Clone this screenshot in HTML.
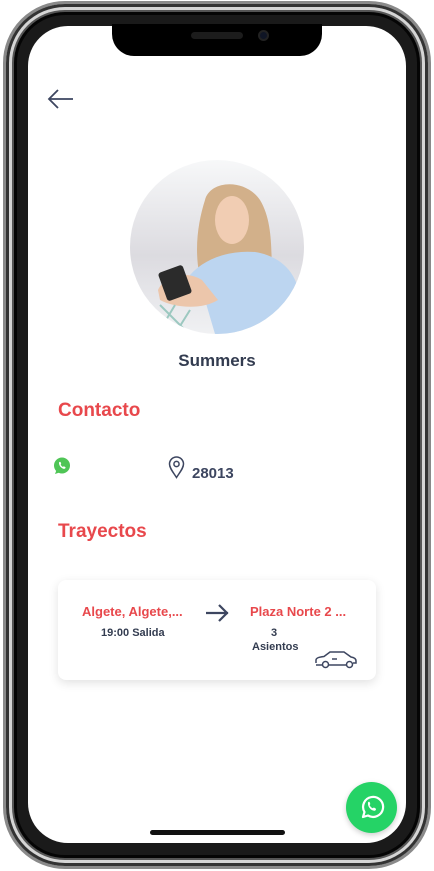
<!DOCTYPE html>
<html><head><meta charset="utf-8"><style>
*{margin:0;padding:0;box-sizing:border-box}
html,body{width:434px;height:871px;background:#fff;overflow:hidden;font-family:"Liberation Sans",sans-serif}
.frame{position:absolute;left:3px;top:1px;width:428px;height:868px;border-radius:62px;background:#1a1a1a;border:3px solid #8a8a8a;box-shadow:inset 0 0 0 3px #333,inset 0 0 0 6px #d5d5d5,inset 0 0 0 8px #555,inset 0 0 0 11px #050505}
.screen{position:absolute;left:28px;top:26px;width:378px;height:817px;border-radius:40px;background:#fff;overflow:hidden}
.notch{position:absolute;left:112px;top:24px;width:210px;height:32px;background:#000;border-radius:0 0 22px 22px}
.spk{position:absolute;left:191px;top:32px;width:52px;height:7px;border-radius:4px;background:#1c1c1c}
.cam{position:absolute;left:258px;top:30px;width:11px;height:11px;border-radius:50%;background:#0f1525;border:2px solid #222}
.t{position:absolute;white-space:nowrap}
.h{color:#e8484c;font-weight:bold;font-size:19px}
.card{position:absolute;left:58px;top:580px;width:318px;height:100px;background:#fff;border-radius:8px;box-shadow:0 3px 10px rgba(0,0,0,.12)}
.r{color:#e8484c;font-weight:bold;font-size:13px}
.d{color:#333c50;font-weight:bold;font-size:11px}
</style></head><body>
<div class="frame"></div>
<div class="screen"></div>
<div class="notch"></div><div class="spk"></div><div class="cam"></div>
<svg class="t" style="left:47px;top:88px" width="28" height="22" viewBox="0 0 28 22"><path d="M26 11H2M11 2L2 11l9 9" fill="none" stroke="#3d4660" stroke-width="1.8"/></svg>
<svg class="t" style="left:130px;top:160px" width="174" height="174" viewBox="0 0 174 174">
<defs><clipPath id="c"><circle cx="87" cy="87" r="87"/></clipPath>
<linearGradient id="bg" x1="0" y1="0" x2="0" y2="1"><stop offset="0" stop-color="#f7f8f9"/><stop offset=".55" stop-color="#dcdbe0"/><stop offset="1" stop-color="#f0f1f3"/></linearGradient></defs>
<g clip-path="url(#c)"><rect width="174" height="174" fill="url(#bg)"/>
<path d="M75 40C80 20 115 18 130 40C145 65 140 100 143 125L75 135C62 100 67 65 75 40Z" fill="#d2b08a"/>
<ellipse cx="102" cy="60" rx="17" ry="24" fill="#f1cdb3"/>
<path d="M60 115C75 98 100 90 125 92C150 96 168 112 170 140L165 174H85L75 140L55 125Z" fill="#bcd5f0"/>
<path d="M28 130C35 115 55 110 72 120L88 140C72 150 45 148 30 140Z" fill="#ecc6ab"/>
<rect x="32" y="108" width="26" height="30" rx="3" transform="rotate(-20 45 123)" fill="#2b2b2b"/>
<path d="M30 145L60 175M45 145L30 170M60 150L45 174" stroke="#9cc8c0" stroke-width="2"/></g></svg>
<div class="t" style="left:0;width:434px;text-align:center;top:351px;font-size:17px;font-weight:bold;color:#333c50">Summers</div>
<div class="t h" style="left:58px;top:400px">Contacto</div>
<svg class="t" style="left:53px;top:457px" width="18" height="18" viewBox="0 0 18 18"><circle cx="9" cy="8.5" r="8" fill="#4fc556"/><path d="M2 17l1.5-4 3 2.5z" fill="#4fc556"/><path d="M6 5.5c.5-1 1.5-.8 1.8 0l.4 1.2c-.3.6-.7.8-.3 1.4.5.8 1.2 1.4 2 1.8.5-.3.8-.7 1.4-.4l1.1.6c.4.4 0 1.4-.8 1.7-2.5.4-6-3-5.6-6.3z" fill="#fff"/></svg>
<svg class="t" style="left:168px;top:456px" width="17" height="23" viewBox="0 0 17 23"><path d="M8.5 21.5C5 16 1.5 12 1.5 8a7 7 0 0114 0c0 4-3.5 8-7 13.5z" fill="none" stroke="#3d4660" stroke-width="1.5"/><circle cx="8.5" cy="8" r="2.6" fill="none" stroke="#3d4660" stroke-width="1.5"/></svg>
<div class="t" style="left:192px;top:465px;font-size:15px;font-weight:bold;color:#3d4660">28013</div>
<div class="t h" style="left:58px;top:521px">Trayectos</div>
<div class="card"></div>
<div class="t r" style="left:82px;top:604px">Algete, Algete,...</div>
<div class="t d" style="left:101px;top:627px">19:00 Salida</div>
<svg class="t" style="left:205px;top:603px" width="25" height="20" viewBox="0 0 25 20"><path d="M1 10h22M14 2l8 8-8 8" fill="none" stroke="#3d4660" stroke-width="2.2"/></svg>
<div class="t r" style="left:250px;top:604px">Plaza Norte 2 ...</div>
<div class="t d" style="left:271px;top:627px">3</div>
<div class="t d" style="left:252px;top:641px">Asientos</div>
<svg class="t" style="left:314px;top:650px" width="44" height="20" viewBox="0 0 44 20"><path d="M2 13v-3c0-2 3-3 8-3.5L16 2h14l7 5c3 .5 5 1.5 5 4v2h-3M9 15H2M33 15H14" fill="none" stroke="#3d4660" stroke-width="1.5"/><circle cx="11.5" cy="14.5" r="3" fill="none" stroke="#3d4660" stroke-width="1.5"/><circle cx="35.5" cy="14.5" r="3" fill="none" stroke="#3d4660" stroke-width="1.5"/><path d="M18 9h5" stroke="#3d4660" stroke-width="1.5"/></svg>
<div class="t" style="left:346px;top:782px;width:51px;height:51px;border-radius:50%;background:#25d366;box-shadow:0 2px 6px rgba(0,0,0,.2)"></div>
<svg class="t" style="left:358px;top:793px" width="28" height="28" viewBox="0 0 28 28"><path d="M5 24l1.5-5A10 10 0 1110 22.5z" fill="none" stroke="#fff" stroke-width="2.2" stroke-linejoin="round"/><path d="M10 9.5c.5-1 1.5-1 1.8 0l.5 1.5c-.3.8-.9 1-.4 1.8.7 1.1 1.6 2 2.7 2.5.7-.4 1-.9 1.8-.5l1.4.8c.5.5 0 1.8-1 2.1-3.2.5-7.6-3.8-6.8-8.2z" fill="#fff"/></svg>
<div class="t" style="left:150px;top:830px;width:135px;height:5px;border-radius:3px;background:#111"></div>
</body></html>
